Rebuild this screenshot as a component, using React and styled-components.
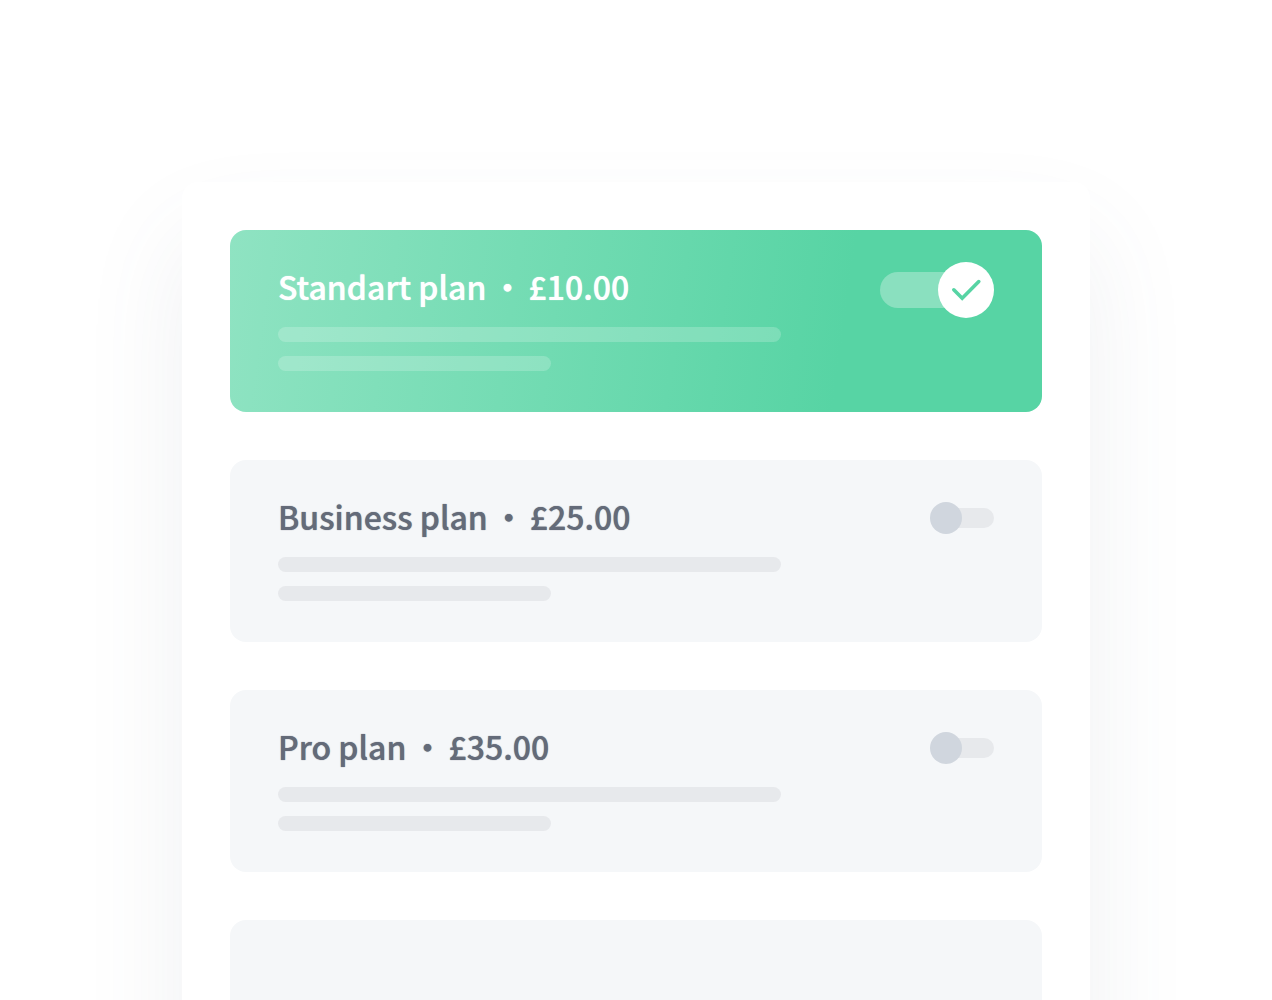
import React, { useState } from "react";
import styled, { createGlobalStyle } from "styled-components";

const GlobalStyle = createGlobalStyle`
  * {
    box-sizing: border-box;
  }
  body {
    margin: 0;
    background: #fff;
    font-family: "Noto Sans CJK JP", "Noto Sans", sans-serif;
  }
`;

const Page = styled.main`
  display: flex;
  justify-content: center;
  align-items: flex-start;
  height: 100vh;
  padding: 182px 24px 0;
  overflow: hidden;
`;

const Panel = styled.form`
  display: flex;
  flex-direction: column;
  gap: 48px;
  width: 100%;
  max-width: 908px;
  padding: 48px;
  border-radius: 16px;
  background: #fff;
  box-shadow: 0 56px 104px rgba(84, 100, 124, 0.09);
`;

const PlanCard = styled.section`
  display: flex;
  justify-content: space-between;
  align-items: flex-start;
  flex-shrink: 0;
  min-height: 182px;
  padding: 32px 48px;
  border-radius: 16px;
  color: ${({ $active }) => ($active ? "#fff" : "#646b79")};
  background: ${({ $active }) =>
    $active ? "linear-gradient(98deg, #8fe3c2 0%, #57d4a4 75%)" : "#f5f7f9"};
`;

const PlanInfo = styled.div`
  flex: 1;
  min-width: 0;
`;

const PlanTitle = styled.h2`
  margin: 0 0 17px;
  font-size: 32px;
  font-weight: 500;
  line-height: 48px;
  text-shadow: 0 0 1px currentColor;
`;

const Dot = styled.span`
  padding: 0 5px;
  line-height: 1;
`;

const TextLine = styled.div`
  width: 100%;
  max-width: ${({ $short }) => ($short ? "273px" : "503px")};
  height: 15px;
  border-radius: 8px;
  background: ${({ $active }) =>
    $active ? "rgba(255, 255, 255, 0.2)" : "#e7e9ec"};

  & + & {
    margin-top: 14px;
  }
`;

const Switch = styled.label`
  position: relative;
  display: flex;
  align-items: center;
  justify-content: ${({ $on }) => ($on ? "flex-start" : "flex-end")};
  width: ${({ $on }) => ($on ? "114px" : "64px")};
  height: ${({ $on }) => ($on ? "56px" : "32px")};
  margin-top: ${({ $on }) => ($on ? "0" : "10px")};
  cursor: pointer;
`;

const SwitchInput = styled.input`
  position: absolute;
  inset: 0;
  width: 100%;
  height: 100%;
  margin: 0;
  opacity: 0;
  cursor: pointer;
`;

const Track = styled.span`
  width: ${({ $on }) => ($on ? "96px" : "56px")};
  height: ${({ $on }) => ($on ? "36px" : "20px")};
  border-radius: 18px;
  background: ${({ $on }) => ($on ? "#8ae0bf" : "#e7e9ec")};
`;

const Knob = styled.span`
  position: absolute;
  top: 0;
  ${({ $on }) => ($on ? "right: 0;" : "left: 0;")}
  width: ${({ $on }) => ($on ? "56px" : "32px")};
  height: ${({ $on }) => ($on ? "56px" : "32px")};
  border-radius: 50%;
  background: ${({ $on }) => ($on ? "#fff" : "#d0d6de")};
  pointer-events: none;
`;

const CheckIcon = () => (
  <svg width="56" height="56" viewBox="0 0 56 56" fill="none" aria-hidden="true">
    <path
      d="M15.8 27.8L24.2 36.2L40.8 19.6"
      stroke="#57d4a4"
      strokeWidth="3.6"
      strokeLinecap="round"
    />
  </svg>
);

const plans = [
  { id: "standart", name: "Standart plan", price: "£10.00" },
  { id: "business", name: "Business plan", price: "£25.00" },
  { id: "pro", name: "Pro plan", price: "£35.00" },
];

const Plan = ({ plan, active, onSelect }) => (
  <PlanCard $active={active}>
    <PlanInfo>
      <PlanTitle id={plan.id}>
        {plan.name}
        <Dot>・</Dot>
        {plan.price}
      </PlanTitle>
      <TextLine $active={active} />
      <TextLine $active={active} $short />
    </PlanInfo>
    <Switch $on={active}>
      <SwitchInput
        type="checkbox"
        role="switch"
        aria-labelledby={plan.id}
        checked={active}
        onChange={() => onSelect(plan.id)}
      />
      <Track $on={active} />
      <Knob $on={active}>{active && <CheckIcon />}</Knob>
    </Switch>
  </PlanCard>
);

const App = () => {
  const [selected, setSelected] = useState("standart");

  return (
    <>
      <GlobalStyle />
      <Page>
        <Panel>
          {plans.map((plan) => (
            <Plan
              key={plan.id}
              plan={plan}
              active={plan.id === selected}
              onSelect={setSelected}
            />
          ))}
          <PlanCard />
        </Panel>
      </Page>
    </>
  );
};

export default App;
